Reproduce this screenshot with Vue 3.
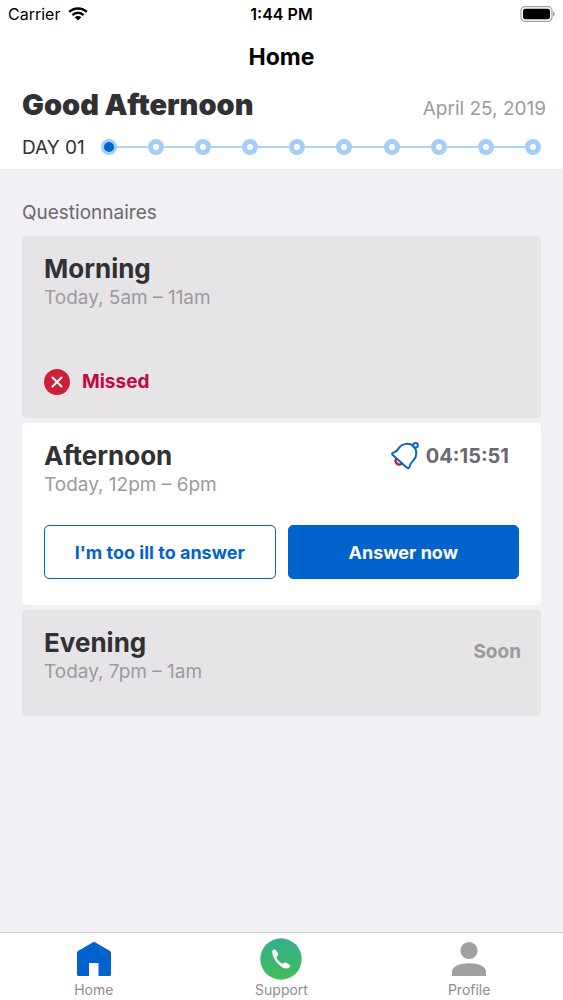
<script setup>
import { ref } from 'vue'

const days = Array.from({ length: 10 }, (_, i) => i + 1)
const currentDay = 1
const activeTab = ref('home')
</script>

<template>
  <div class="app">
    <header class="top">
      <div class="status">
        <div class="carrier">
          <span>Carrier</span>
          <svg width="20" height="14" viewBox="0 0 20 14" aria-hidden="true">
            <g fill="none" stroke="#000" stroke-width="2.5">
              <path d="M1.2 4.9C6 .3 14 .3 18.8 4.9" />
              <path d="M4.4 8.1c3.200-3 8-3 11.200 0" />
            </g>
            <path d="M10 13.600 6.700 10.300c1.800-1.700 4.800-1.700 6.600 0z" />
          </svg>
        </div>
        <span class="clock">1:44 PM</span>
        <div class="battery">
          <svg width="36" height="16" viewBox="0 0 36 16" aria-hidden="true">
            <rect x="2" y=".7" width="31" height="14.600" rx="4" fill="none" stroke="#a3a3a3" stroke-width="1.200" />
            <rect x="4" y="2.700" width="27" height="10.600" rx="2.200" />
            <path d="M34.200 5.500c2 .6 2 4.400 0 5z" fill="#999" />
          </svg>
        </div>
      </div>
      <div class="title">Home</div>
      <div class="greeting">
        <h1>Good Afternoon</h1>
        <time datetime="2019-04-25">April 25, 2019</time>
      </div>
      <div class="progress">
        <span class="day">DAY 01</span>
        <ol class="steps">
          <li v-for="d in days" :key="d" :class="{ current: d === currentDay }">
            <span class="dot"></span>
          </li>
        </ol>
      </div>
    </header>

    <main class="content">
      <h2>Questionnaires</h2>

      <section class="card muted tall">
        <h3>Morning</h3>
        <p class="when">Today, 5am – 11am</p>
        <p class="missed">
          <svg width="26" height="26" viewBox="0 0 26 26" aria-hidden="true">
            <circle cx="13" cy="13" r="13" fill="#cc1f3a" />
            <path d="m8.500 8.500 9 9m0-9-9 9" fill="none" stroke="#fff" stroke-width="2" stroke-linecap="round" />
          </svg>
          <span>Missed</span>
        </p>
      </section>

      <section class="card tall">
        <div class="row">
          <div>
            <h3>Afternoon</h3>
            <p class="when">Today, 12pm – 6pm</p>
          </div>
          <div class="timer">
            <svg width="28" height="28" viewBox="0 0 28 28" fill="none" stroke-width="2" aria-hidden="true">
              <path d="M5.200 16.500c-2.200 3.600 1.500 7.600 5.600 5.200" stroke="#d0103f" stroke-width="2.200" />
              <path d="M1.500 12.700c-.8-1-.3-2.100 1.200-2.300 2.300-.3 3.500-1.600 4.600-3.600C9.800 2.400 17.400-.3 22.300 4c4.300 4.300 3.600 10.600.1 14.400-1.900 1.900-3.500 3.300-3.700 5.700-.2 2.200-1.700 2.700-3 1.500z" fill="#fff" stroke="#0b66c3" stroke-linejoin="round" />
              <circle cx="24.600" cy="3.300" r="2.300" fill="#fff" stroke="#0b66c3" />
            </svg>
            <span>04:15:51</span>
          </div>
        </div>
        <div class="actions">
          <button type="button" class="btn outline">I'm too ill to answer</button>
          <button type="button" class="btn solid">Answer now</button>
        </div>
      </section>

      <section class="card muted">
        <div class="row">
          <div>
            <h3>Evening</h3>
            <p class="when">Today, 7pm – 1am</p>
          </div>
          <span class="soon">Soon</span>
        </div>
      </section>
    </main>

    <nav class="tabs">
      <button type="button" :class="{ active: activeTab === 'home' }" @click="activeTab = 'home'">
        <svg width="42" height="42" viewBox="0 0 42 42" aria-hidden="true">
          <path d="M4 14.500Q4 13.500 5 12.900L20 4.300q1-.6 2 0l15 8.600q1 .6 1 1.600V36.500q0 1.500-1.500 1.500H25.500V25H16V38H5.500Q4 38 4 36.500z" fill="#0263cc" />
        </svg>
        <span>Home</span>
      </button>
      <button type="button" :class="{ active: activeTab === 'support' }" @click="activeTab = 'support'">
        <svg width="42" height="42" viewBox="0 0 42 42" aria-hidden="true">
          <defs>
            <linearGradient id="call" x1="0" y1="0" x2="0" y2="1">
              <stop offset="0" stop-color="#34ae91" />
              <stop offset="1" stop-color="#43bd56" />
            </linearGradient>
          </defs>
          <circle cx="21" cy="21" r="20.700" fill="url(#call)" />
          <path d="M12.300 12.800c.8-1 2.700-1.900 3.800-.5l1.900 3.300c.8 1.600-1 2.500-1.400 3.400-.3 1 .6 2.300 1.900 3.800 1.500 1.700 3 2.800 4.100 2.700 1-.1 1.700-1.500 3.100-1l3.700 1.900c1.500 1 .7 2.700-.5 3.400-2.500 1.500-6.400.5-10.200-3.200-3.900-3.700-7-9.800-6.400-13.800z" fill="#fff" />
        </svg>
        <span>Support</span>
      </button>
      <button type="button" :class="{ active: activeTab === 'profile' }" @click="activeTab = 'profile'">
        <svg width="42" height="42" viewBox="0 0 42 42" fill="#a09fa2" aria-hidden="true">
          <circle cx="21" cy="12.500" r="8.600" />
          <path d="M4 38v-4.500C4 28.500 11.500 25.200 21 25.200s17 3.300 17 8.300V38z" />
        </svg>
        <span>Profile</span>
      </button>
    </nav>
  </div>
</template>

<style>
body {
  background: #f2f0f4;
}
</style>

<style scoped>
.app {
  min-height: 100vh;
  display: flex;
  flex-direction: column;
  background: #f2f0f4;
  color: #313033;
  font-family: Inter, "Liberation Sans", sans-serif;
}
h1, h2, h3, p, ol {
  margin: 0;
  padding: 0;
}
svg {
  display: block;
  flex: none;
}
.top {
  background: #fff;
  padding-bottom: 5px;
}
.status {
  display: grid;
  grid-template-columns: 1fr auto 1fr;
  align-items: center;
  height: 28px;
  padding: 0 8px;
  color: #000;
  font-size: 16px;
}
.carrier {
  display: flex;
  align-items: center;
  gap: 8px;
}
.clock {
  font-weight: 600;
}
.battery {
  display: flex;
  justify-content: flex-end;
}
.title {
  height: 58px;
  line-height: 58px;
  text-align: center;
  font-size: 23px;
  font-weight: 700;
  color: #000;
}
.greeting {
  display: flex;
  align-items: baseline;
  justify-content: space-between;
  padding: 0 17px 0 22px;
}
h1 {
  font-size: 29px;
  line-height: 38px;
  font-weight: 900;
}
time {
  font-size: 19px;
  color: #9b9a9d;
}
.progress {
  display: flex;
  align-items: center;
  gap: 16px;
  height: 34px;
  margin-top: 6px;
  padding: 0 22px;
}
.day {
  font-size: 19px;
}
.steps {
  flex: 1;
  display: flex;
  list-style: none;
}
.steps li {
  flex: 1;
  display: flex;
  align-items: center;
}
.steps li:last-child {
  flex: none;
}
.steps li:not(:last-child)::after {
  content: "";
  flex: 1;
  height: 2px;
  background: #b0d4f6;
}
.dot {
  box-sizing: border-box;
  width: 16px;
  height: 16px;
  border: 5px solid #a3cef8;
  border-radius: 50%;
  background: #fff;
}
.current .dot {
  border-width: 3px;
  background: #0263cc;
}
.content {
  flex: 1;
  display: flex;
  flex-direction: column;
  gap: 5px;
  padding: 31px 22px;
}
h2 {
  font-size: 19px;
  line-height: 26px;
  font-weight: 400;
  color: #6a696c;
  margin-bottom: 5px;
}
.card {
  box-sizing: border-box;
  min-height: 106px;
  padding: 16px 22px;
  border-radius: 4px;
  background: #fff;
}
.tall {
  min-height: 182px;
}
.muted {
  padding-right: 20px;
  background: #e6e4e7;
}
h3 {
  font-size: 26px;
  line-height: 33px;
  font-weight: 700;
}
.when {
  font-size: 19px;
  line-height: 26px;
  color: #9b9a9d;
}
.row {
  display: flex;
  justify-content: space-between;
}
.missed {
  display: flex;
  align-items: center;
  gap: 12px;
  margin-top: 58px;
  font-size: 19px;
  line-height: 26px;
  font-weight: 700;
  color: #c50741;
}
.timer {
  display: flex;
  align-items: center;
  gap: 7px;
  height: 33px;
  padding-right: 10px;
  font-size: 20px;
  font-weight: 700;
  color: #6a696c;
}
.actions {
  display: grid;
  grid-template-columns: 1fr 1fr;
  gap: 12px;
  margin-top: 27px;
}
.btn {
  box-sizing: border-box;
  height: 54px;
  padding: 0;
  border: 1px solid #0263cc;
  border-radius: 5px;
  font: inherit;
  font-size: 18px;
  font-weight: 700;
  cursor: pointer;
}
.outline {
  background: #fff;
  color: #0263cc;
}
.solid {
  background: #0263cc;
  color: #fff;
}
.soon {
  margin-top: 9px;
  font-size: 19px;
  line-height: 33px;
  font-weight: 700;
  color: #9b9a9d;
}
.tabs {
  position: sticky;
  bottom: 0;
  display: grid;
  grid-template-columns: repeat(3, 1fr);
  border-top: 1px solid #d2d0d4;
  background: #fff;
}
.tabs button {
  display: flex;
  flex-direction: column;
  align-items: center;
  padding: 5px 0 0;
  border: 0;
  background: none;
  font: inherit;
  font-size: 14px;
  line-height: 20px;
  color: #8e8d90;
  cursor: pointer;
}
</style>
